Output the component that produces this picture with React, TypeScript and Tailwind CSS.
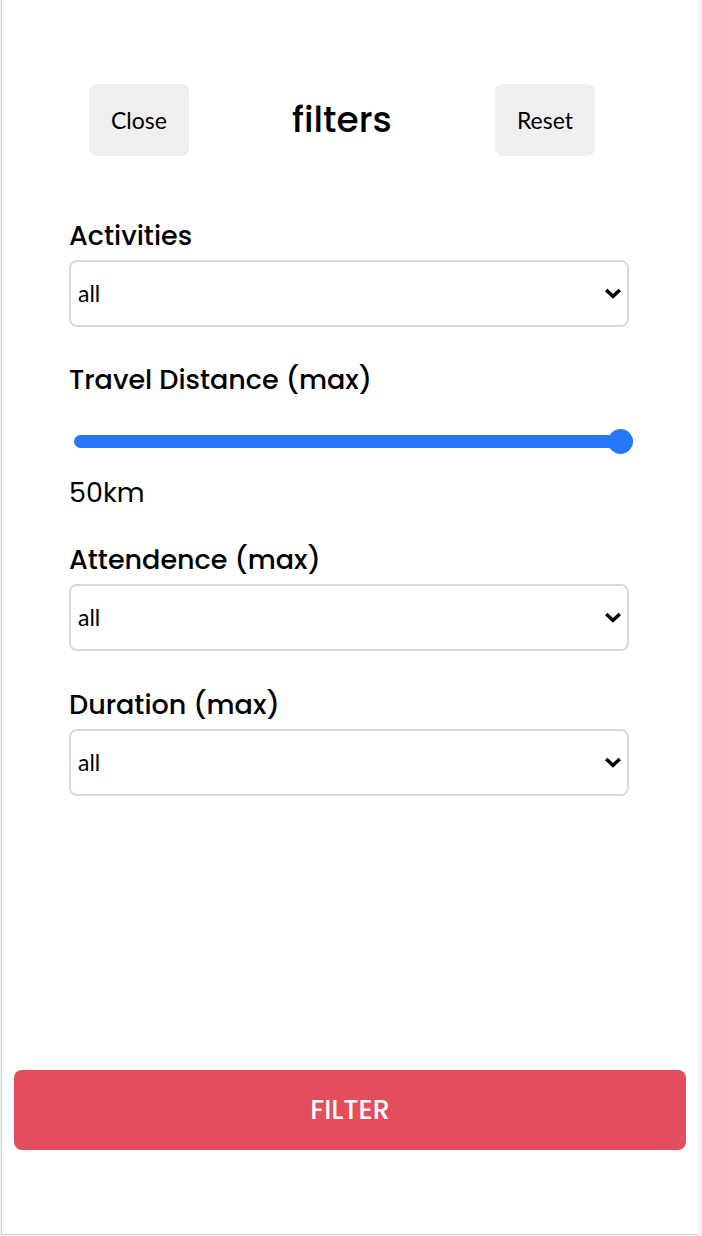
import { useState } from "react";

const heading = "font-['Poppins','Inter',sans-serif]";

function SelectField({ id, label, options }: { id: string; label: string; options: string[] }) {
  return (
    <div className="flex flex-col gap-1">
      <label htmlFor={id} className={`${heading} text-[27px] leading-10 font-medium`}>
        {label}
      </label>
      <div className="grid items-center">
        <select
          id={id}
          className="col-start-1 row-start-1 h-[67px] w-full appearance-none rounded-lg border-2 border-[#d9d9d9] bg-white px-[7px] text-[23px]"
        >
          {options.map((option) => (
            <option key={option}>{option}</option>
          ))}
        </select>
        <svg
          aria-hidden="true"
          viewBox="0 0 16 11"
          className="pointer-events-none col-start-1 row-start-1 mr-2 h-[11px] w-4 justify-self-end"
          fill="none"
          stroke="black"
          strokeWidth="3.4"
        >
          <path d="M1.2 1.9 8 8.3l6.8-6.4" />
        </svg>
      </div>
    </div>
  );
}

export default function App() {
  const [distance, setDistance] = useState(50);

  return (
    <div className="flex min-h-screen flex-col bg-[#f2f2f2] pr-1 pb-px pl-px font-['Lato',sans-serif] text-black">
      <main className="flex flex-1 flex-col border-b border-l border-[#d0d0d0] bg-white pt-[84px] pb-[84px]">
        <div className="flex flex-col pr-[69px] pl-[67px]">
          <header className="flex items-center justify-between pr-[34px] pl-5">
            <button type="button" className="h-[72px] rounded-lg bg-[#efefef] px-[22px] text-[23px]">
              Close
            </button>
            <h1 className={`${heading} text-[36px] leading-[56px] font-medium`}>filters</h1>
            <button type="button" className="h-[72px] rounded-lg bg-[#efefef] px-[22px] text-[23px]">
              Reset
            </button>
          </header>

          <form id="filters" className="mt-[60px] flex flex-col">
            <SelectField id="activities" label="Activities" options={["all", "sports", "music", "outdoors"]} />

            <div className="mt-[33px] mb-[27px] flex flex-col">
              <label htmlFor="distance" className={`${heading} text-[27px] leading-10 font-medium`}>
                Travel Distance (max)
              </label>
              <input
                id="distance"
                type="range"
                min={0}
                max={50}
                value={distance}
                onChange={(event) => setDistance(Number(event.target.value))}
                style={{
                  backgroundImage: `linear-gradient(to right, #2777f8 ${distance * 2}%, #efefef ${distance * 2}%)`,
                }}
                className="mt-[35px] -mr-1 mb-[25px] ml-[5px] h-[13px] appearance-none rounded-full [&::-webkit-slider-thumb]:size-[25px] [&::-webkit-slider-thumb]:appearance-none [&::-webkit-slider-thumb]:rounded-full [&::-webkit-slider-thumb]:bg-[#2777f8]"
              />
              <output htmlFor="distance" className={`${heading} text-[27px] leading-10`}>
                {distance}km
              </output>
            </div>

            <div className="flex flex-col gap-[34px]">
              <SelectField id="attendence" label="Attendence (max)" options={["all", "10", "20", "50"]} />
              <SelectField id="duration" label="Duration (max)" options={["all", "1 hour", "2 hours", "4 hours"]} />
            </div>
          </form>
        </div>

        <button
          type="submit"
          form="filters"
          className={`${heading} mx-3 mt-auto h-20 rounded-lg bg-[#e44d5c] text-[27px] font-medium text-white`}
        >
          FILTER
        </button>
      </main>
    </div>
  );
}
